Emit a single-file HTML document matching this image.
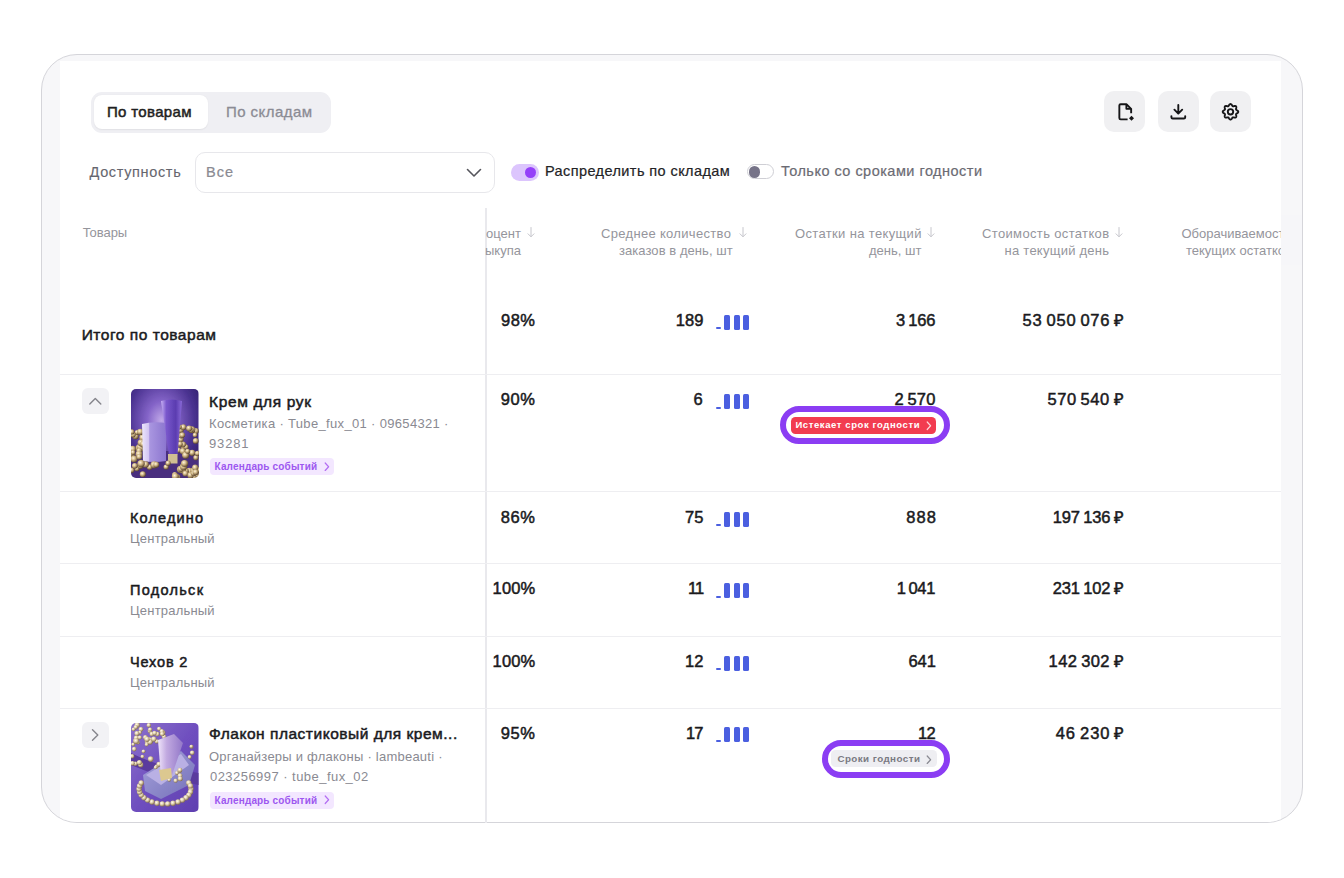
<!DOCTYPE html>
<html><head><meta charset="utf-8">
<style>
html,body{margin:0;padding:0;background:#fff;width:1344px;height:878px;overflow:hidden;font-family:"Liberation Sans",sans-serif}
.abs{position:absolute}
.t{position:absolute;white-space:nowrap}
#frame{position:absolute;left:40.5px;top:53.5px;width:1260px;height:767px;border:1.5px solid #d5d5da;border-radius:36px;background:#f7f7f9;overflow:hidden}
#white{position:absolute;left:18px;top:6.8px;width:1221.5px;height:800px;background:#fff}
.hl{position:absolute;left:60px;width:1221px;height:1.2px;background:#eeeef1}
.bars{position:absolute;width:34px;height:15px}
.bars i{position:absolute;background:#4b5fe0;border-radius:1.5px}
.ibtn{position:absolute;top:91px;width:41px;height:41px;border-radius:10px;background:#f0f0f2}
.ibtn svg{position:absolute;left:0;top:0}
.rbtn{position:absolute;left:82px;width:26.5px;height:25.5px;border-radius:6px;background:#f2f2f5}
.img{position:absolute;left:131px;width:67.5px;height:89.5px;border-radius:5px;overflow:hidden}
.outl{position:absolute;border:6px solid #8b3df3;border-radius:19px;background:#fff}
.badge{position:absolute;height:17px;border-radius:4.5px}
.cal{position:absolute;left:209.5px;width:124px;height:17px;border-radius:4px;background:#f3e7ff}
</style></head><body>
<div id="frame"><div id="white"></div></div>

<!-- segmented -->
<div class="abs" style="left:90.5px;top:92px;width:240.5px;height:40.5px;border-radius:11px;background:#efeff3"></div>
<div class="abs" style="left:94px;top:95px;width:114px;height:34px;border-radius:8px;background:#fff;box-shadow:0 0.5px 1.5px rgba(0,0,0,0.06)"></div>

<!-- select -->
<div class="abs" style="left:195px;top:152px;width:297.5px;height:38.5px;border:1px solid #e7e7eb;border-radius:10px;background:#fff"></div>
<svg class="abs" style="left:462px;top:162px" width="24" height="22" viewBox="0 0 24 22"><path d="M5.5 7.5 L12 14 L18.5 7.5" fill="none" stroke="#55555c" stroke-width="1.6" stroke-linecap="round" stroke-linejoin="round"/></svg>

<!-- toggles -->
<div class="abs" style="left:511px;top:164px;width:27.5px;height:16.5px;border-radius:8.5px;background:#dcc5fd"></div>
<div class="abs" style="left:524.8px;top:166.5px;width:11.5px;height:11.5px;border-radius:50%;background:#9540f9"></div>
<div class="abs" style="left:747px;top:163.8px;width:24.5px;height:13.5px;border:1.5px solid #cfcfd5;border-radius:9px;background:#fff"></div>
<div class="abs" style="left:749px;top:166.4px;width:11.3px;height:11.3px;border-radius:50%;background:#767388"></div>

<!-- icon buttons -->
<div class="ibtn" style="left:1104px"><svg width="41" height="41" viewBox="0 0 41 41"><path d="M27.15 22.3 V17.85 L22.4 13.25 H16.7 Q15.35 13.25 15.35 14.6 V27 Q15.35 28.35 16.7 28.35 H23.6" fill="none" stroke="#161618" stroke-width="1.9" stroke-linejoin="round"/><path d="M22.4 13.5 V17.85 H26.9" fill="none" stroke="#161618" stroke-width="1.9" stroke-linejoin="round"/><path d="M27.5 24.8 L30 27.3 L27.5 29.8 L25 27.3 Z" fill="#161618"/></svg></div>
<div class="ibtn" style="left:1157.5px"><svg width="41" height="41" viewBox="0 0 41 41"><path d="M20.3 13.9 V22.3 M16.4 18.7 L20.3 22.6 L24.2 18.7" fill="none" stroke="#161618" stroke-width="1.9" stroke-linecap="round" stroke-linejoin="round"/><path d="M13.4 25.1 V26.2 Q13.4 27.5 14.7 27.5 H25.9 Q27.2 27.5 27.2 26.2 V25.1" fill="none" stroke="#161618" stroke-width="1.9" stroke-linecap="round"/></svg></div>
<div class="ibtn" style="left:1210px"><svg width="41" height="41" viewBox="0 0 41 41" id="gear"><path d="M20.50 13.05 L20.80 13.10 L21.10 13.24 L21.37 13.45 L21.62 13.73 L21.85 14.03 L22.05 14.35 L22.24 14.64 L22.42 14.89 L22.61 15.08 L22.82 15.21 L23.05 15.27 L23.32 15.26 L23.63 15.22 L23.97 15.14 L24.33 15.06 L24.71 15.01 L25.08 14.99 L25.43 15.03 L25.73 15.14 L25.98 15.32 L26.16 15.57 L26.27 15.87 L26.31 16.22 L26.29 16.59 L26.24 16.97 L26.16 17.33 L26.08 17.67 L26.04 17.98 L26.03 18.25 L26.09 18.48 L26.22 18.69 L26.41 18.88 L26.66 19.06 L26.95 19.25 L27.27 19.45 L27.57 19.68 L27.85 19.93 L28.06 20.20 L28.20 20.50 L28.25 20.80 L28.20 21.10 L28.06 21.40 L27.85 21.67 L27.57 21.92 L27.27 22.15 L26.95 22.35 L26.66 22.54 L26.41 22.72 L26.22 22.91 L26.09 23.12 L26.03 23.35 L26.04 23.62 L26.08 23.93 L26.16 24.27 L26.24 24.63 L26.29 25.01 L26.31 25.38 L26.27 25.73 L26.16 26.03 L25.98 26.28 L25.73 26.46 L25.43 26.57 L25.08 26.61 L24.71 26.59 L24.33 26.54 L23.97 26.46 L23.63 26.38 L23.32 26.34 L23.05 26.33 L22.82 26.39 L22.61 26.52 L22.42 26.71 L22.24 26.96 L22.05 27.25 L21.85 27.57 L21.62 27.87 L21.37 28.15 L21.10 28.36 L20.80 28.50 L20.50 28.55 L20.20 28.50 L19.90 28.36 L19.63 28.15 L19.38 27.87 L19.15 27.57 L18.95 27.25 L18.76 26.96 L18.58 26.71 L18.39 26.52 L18.18 26.39 L17.95 26.33 L17.68 26.34 L17.37 26.38 L17.03 26.46 L16.67 26.54 L16.29 26.59 L15.92 26.61 L15.57 26.57 L15.27 26.46 L15.02 26.28 L14.84 26.03 L14.73 25.73 L14.69 25.38 L14.71 25.01 L14.76 24.63 L14.84 24.27 L14.92 23.93 L14.96 23.62 L14.97 23.35 L14.91 23.12 L14.78 22.91 L14.59 22.72 L14.34 22.54 L14.05 22.35 L13.73 22.15 L13.43 21.92 L13.15 21.67 L12.94 21.40 L12.80 21.10 L12.75 20.80 L12.80 20.50 L12.94 20.20 L13.15 19.93 L13.43 19.68 L13.73 19.45 L14.05 19.25 L14.34 19.06 L14.59 18.88 L14.78 18.69 L14.91 18.48 L14.97 18.25 L14.96 17.98 L14.92 17.67 L14.84 17.33 L14.76 16.97 L14.71 16.59 L14.69 16.22 L14.73 15.87 L14.84 15.57 L15.02 15.32 L15.27 15.14 L15.57 15.03 L15.92 14.99 L16.29 15.01 L16.67 15.06 L17.03 15.14 L17.37 15.22 L17.68 15.26 L17.95 15.27 L18.18 15.21 L18.39 15.08 L18.58 14.89 L18.76 14.64 L18.95 14.35 L19.15 14.03 L19.38 13.73 L19.63 13.45 L19.90 13.24 L20.20 13.10 L20.50 13.05 Z" fill="none" stroke="#161618" stroke-width="1.9" stroke-linejoin="round"/><circle cx="20.5" cy="20.8" r="2.7" fill="none" stroke="#161618" stroke-width="1.9"/></svg></div>

<!-- table lines -->
<div class="abs" style="left:485.3px;top:208px;width:1.4px;height:615px;background:#e9e9ed"></div>
<div class="hl" style="top:374px"></div>
<div class="hl" style="top:490.6px"></div>
<div class="hl" style="top:563px"></div>
<div class="hl" style="top:635.6px"></div>
<div class="hl" style="top:708px"></div>

<!-- row buttons -->
<div class="rbtn" style="top:388.3px"><svg width="27" height="26" viewBox="0 0 27 26"><path d="M7.8 16 L13.3 10.5 L18.8 16" fill="none" stroke="#85858c" stroke-width="1.4" stroke-linecap="round" stroke-linejoin="round"/></svg></div>
<div class="rbtn" style="top:722px"><svg width="27" height="26" viewBox="0 0 27 26"><path d="M10.5 7.8 L15.8 13 L10.5 18.2" fill="none" stroke="#85858c" stroke-width="1.4" stroke-linecap="round" stroke-linejoin="round"/></svg></div>

<!-- images -->
<div class="img" style="top:388.5px"><svg width="67.5" height="89.5" viewBox="0 0 67.5 89.5"><defs><radialGradient id="bg1" cx="0.45" cy="0.35" r="0.7"><stop offset="0" stop-color="#c0a8e8"/><stop offset="0.3" stop-color="#8464c8"/><stop offset="0.7" stop-color="#4a3290"/><stop offset="1" stop-color="#2e1f6a"/></radialGradient><radialGradient id="pg1" cx="0.38" cy="0.35" r="0.65"><stop offset="0" stop-color="#fff6de"/><stop offset="0.45" stop-color="#d2b988"/><stop offset="1" stop-color="#5e4830"/></radialGradient><linearGradient id="tb" x1="0" x2="1"><stop offset="0" stop-color="#c8b2f4"/><stop offset="0.25" stop-color="#7a58cc"/><stop offset="0.7" stop-color="#5a3cb0"/><stop offset="1" stop-color="#8a6ad8"/></linearGradient><linearGradient id="bx" x1="0" x2="1"><stop offset="0" stop-color="#ece6fb"/><stop offset="0.28" stop-color="#d2c4f2"/><stop offset="0.32" stop-color="#a996e0"/><stop offset="1" stop-color="#8c76cf"/></linearGradient><filter id="bl1"><feGaussianBlur stdDeviation="0.5"/></filter></defs><g filter="url(#bl1)"><rect width="67.5" height="89.5" fill="url(#bg1)"/><rect y="62" width="67.5" height="27.5" fill="#4a2f7e"/><circle cx="4.5" cy="47.2" r="3.2" fill="url(#pg1)"/><circle cx="1.0" cy="65.7" r="2.8" fill="url(#pg1)"/><circle cx="0.8" cy="64.4" r="2.4" fill="url(#pg1)"/><circle cx="6.1" cy="43.4" r="2.5" fill="url(#pg1)"/><circle cx="5.9" cy="79.7" r="2.5" fill="url(#pg1)"/><circle cx="3.1" cy="70.1" r="3.5" fill="url(#pg1)"/><circle cx="8.1" cy="59.0" r="3.6" fill="url(#pg1)"/><circle cx="0.7" cy="81.2" r="2.7" fill="url(#pg1)"/><circle cx="2.0" cy="45.7" r="2.8" fill="url(#pg1)"/><circle cx="11.4" cy="48.7" r="3.1" fill="url(#pg1)"/><circle cx="8.9" cy="57.9" r="3.1" fill="url(#pg1)"/><circle cx="0.9" cy="42.9" r="2.6" fill="url(#pg1)"/><circle cx="9.5" cy="60.5" r="2.8" fill="url(#pg1)"/><circle cx="8.2" cy="61.8" r="2.8" fill="url(#pg1)"/><circle cx="11.1" cy="73.6" r="2.7" fill="url(#pg1)"/><circle cx="8.0" cy="65.2" r="3.5" fill="url(#pg1)"/><circle cx="10.2" cy="53.8" r="3.6" fill="url(#pg1)"/><circle cx="1.7" cy="60.1" r="3.3" fill="url(#pg1)"/><circle cx="2.1" cy="63.5" r="2.4" fill="url(#pg1)"/><circle cx="9.4" cy="76.7" r="3.1" fill="url(#pg1)"/><circle cx="12.3" cy="55.1" r="3.2" fill="url(#pg1)"/><circle cx="8.3" cy="67.8" r="2.9" fill="url(#pg1)"/><circle cx="11.8" cy="85.3" r="3.0" fill="url(#pg1)"/><circle cx="9.3" cy="42.9" r="3.2" fill="url(#pg1)"/><circle cx="60.3" cy="87.7" r="3.4" fill="url(#pg1)"/><circle cx="52.8" cy="57.3" r="3.2" fill="url(#pg1)"/><circle cx="47.5" cy="61.1" r="2.6" fill="url(#pg1)"/><circle cx="49.4" cy="40.9" r="3.3" fill="url(#pg1)"/><circle cx="49.7" cy="50.4" r="2.9" fill="url(#pg1)"/><circle cx="64.9" cy="42.0" r="2.9" fill="url(#pg1)"/><circle cx="58.3" cy="82.2" r="3.4" fill="url(#pg1)"/><circle cx="64.7" cy="51.9" r="2.9" fill="url(#pg1)"/><circle cx="54.4" cy="82.2" r="3.5" fill="url(#pg1)"/><circle cx="50.1" cy="46.8" r="2.7" fill="url(#pg1)"/><circle cx="51.8" cy="62.2" r="3.1" fill="url(#pg1)"/><circle cx="52.4" cy="38.2" r="2.9" fill="url(#pg1)"/><circle cx="54.6" cy="66.3" r="3.5" fill="url(#pg1)"/><circle cx="61.2" cy="63.8" r="3.1" fill="url(#pg1)"/><circle cx="60.9" cy="40.7" r="3.5" fill="url(#pg1)"/><circle cx="63.0" cy="81.7" r="3.4" fill="url(#pg1)"/><circle cx="55.0" cy="57.9" r="2.5" fill="url(#pg1)"/><circle cx="60.0" cy="41.1" r="2.5" fill="url(#pg1)"/><circle cx="51.3" cy="46.1" r="2.8" fill="url(#pg1)"/><circle cx="48.1" cy="38.0" r="2.6" fill="url(#pg1)"/><circle cx="49.1" cy="56.2" r="2.4" fill="url(#pg1)"/><circle cx="64.9" cy="68.7" r="2.6" fill="url(#pg1)"/><circle cx="52.2" cy="55.4" r="2.8" fill="url(#pg1)"/><circle cx="49.5" cy="80.4" r="3.6" fill="url(#pg1)"/><circle cx="56.6" cy="62.2" r="2.5" fill="url(#pg1)"/><circle cx="49.1" cy="55.1" r="2.7" fill="url(#pg1)"/><circle cx="64.0" cy="46.1" r="2.4" fill="url(#pg1)"/><circle cx="66.5" cy="64.4" r="2.6" fill="url(#pg1)"/><circle cx="58.1" cy="39.4" r="3.0" fill="url(#pg1)"/><circle cx="67.1" cy="81.2" r="3.2" fill="url(#pg1)"/><path d="M11 35 Q22 32 35 34 L35 72 Q22 74 12 72 Z" fill="url(#bx)"/><path d="M30 12 Q40 9 51 12 L46.5 66 L38 66 Z" fill="url(#tb)"/><rect x="37" y="65" width="9.5" height="9.5" fill="#d0bf92"/><circle cx="18.7" cy="78.2" r="2.8" fill="url(#pg1)"/><circle cx="51.4" cy="81.1" r="3.5" fill="url(#pg1)"/><circle cx="23.1" cy="75.8" r="3.6" fill="url(#pg1)"/><circle cx="65.0" cy="86.5" r="3.6" fill="url(#pg1)"/><circle cx="54.4" cy="84.6" r="2.9" fill="url(#pg1)"/><circle cx="35.1" cy="78.0" r="2.6" fill="url(#pg1)"/><circle cx="3.8" cy="76.8" r="2.9" fill="url(#pg1)"/><circle cx="46.3" cy="88.3" r="3.1" fill="url(#pg1)"/><circle cx="62.0" cy="88.8" r="3.7" fill="url(#pg1)"/><circle cx="25.3" cy="75.7" r="2.9" fill="url(#pg1)"/><circle cx="14.6" cy="75.5" r="3.3" fill="url(#pg1)"/><circle cx="59.6" cy="86.3" r="3.2" fill="url(#pg1)"/><circle cx="43.8" cy="85.6" r="2.7" fill="url(#pg1)"/><circle cx="44.3" cy="87.5" r="3.5" fill="url(#pg1)"/><circle cx="50.0" cy="80.1" r="2.8" fill="url(#pg1)"/><circle cx="52.5" cy="77.7" r="3.6" fill="url(#pg1)"/><circle cx="64.2" cy="78.7" r="3.1" fill="url(#pg1)"/><circle cx="62.6" cy="84.3" r="2.8" fill="url(#pg1)"/><circle cx="10.1" cy="74.6" r="3.7" fill="url(#pg1)"/><circle cx="53.6" cy="74.5" r="3.6" fill="url(#pg1)"/><circle cx="64.7" cy="83.2" r="3.0" fill="url(#pg1)"/><circle cx="37.1" cy="74.2" r="2.6" fill="url(#pg1)"/></g></svg></div>
<div class="img" style="top:722.5px"><svg width="67.5" height="89.5" viewBox="0 0 67.5 89.5"><defs><linearGradient id="bg2" x1="0" y1="0" x2="1" y2="1"><stop offset="0" stop-color="#8c72cc"/><stop offset="0.5" stop-color="#6f4fbf"/><stop offset="1" stop-color="#5f3fb0"/></linearGradient><radialGradient id="pg2" cx="0.38" cy="0.35" r="0.65"><stop offset="0" stop-color="#fffbf0"/><stop offset="0.45" stop-color="#e2d3b0"/><stop offset="1" stop-color="#86704e"/></radialGradient><linearGradient id="tb2" x1="0" x2="1"><stop offset="0" stop-color="#efe4fa"/><stop offset="0.35" stop-color="#c1a9e0"/><stop offset="1" stop-color="#9277c8"/></linearGradient><linearGradient id="bx2" x1="0" y1="0" x2="1" y2="1"><stop offset="0" stop-color="#a6a2dc"/><stop offset="1" stop-color="#7470b8"/></linearGradient><filter id="bl2"><feGaussianBlur stdDeviation="0.5"/></filter></defs><g filter="url(#bl2)"><rect width="67.5" height="89.5" fill="url(#bg2)"/><path d="M0 30 Q30 45 67.5 50 L67.5 62 Q30 55 0 42 Z" fill="#5a3a9e"/><circle cx="33.0" cy="13.7" r="2.3" fill="url(#pg2)"/><circle cx="31.7" cy="9.8" r="2.7" fill="url(#pg2)"/><circle cx="28.1" cy="5.8" r="2.1" fill="url(#pg2)"/><circle cx="10.0" cy="6.3" r="2.4" fill="url(#pg2)"/><circle cx="8.8" cy="9.5" r="1.9" fill="url(#pg2)"/><circle cx="30.9" cy="8.4" r="2.3" fill="url(#pg2)"/><circle cx="19.8" cy="18.3" r="2.2" fill="url(#pg2)"/><circle cx="31.2" cy="11.0" r="2.3" fill="url(#pg2)"/><circle cx="17.8" cy="2.3" r="2.2" fill="url(#pg2)"/><circle cx="6.2" cy="2.1" r="2.6" fill="url(#pg2)"/><circle cx="5.9" cy="10.5" r="2.5" fill="url(#pg2)"/><circle cx="18.9" cy="7.9" r="2.3" fill="url(#pg2)"/><circle cx="18.9" cy="16.1" r="1.9" fill="url(#pg2)"/><circle cx="19.1" cy="6.5" r="2.1" fill="url(#pg2)"/><circle cx="26.3" cy="11.1" r="2.4" fill="url(#pg2)"/><circle cx="25.8" cy="18.4" r="2.2" fill="url(#pg2)"/><circle cx="20.8" cy="11.1" r="2.3" fill="url(#pg2)"/><circle cx="23.6" cy="10.1" r="2.3" fill="url(#pg2)"/><circle cx="16.3" cy="18.9" r="2.5" fill="url(#pg2)"/><circle cx="29.8" cy="19.0" r="2.1" fill="url(#pg2)"/><circle cx="19.0" cy="19.0" r="2.6" fill="url(#pg2)"/><circle cx="4.7" cy="4.2" r="2.2" fill="url(#pg2)"/><circle cx="2.5" cy="6.3" r="1.9" fill="url(#pg2)"/><circle cx="22.8" cy="16.1" r="2.7" fill="url(#pg2)"/><circle cx="5.3" cy="14.9" r="2.5" fill="url(#pg2)"/><circle cx="4.9" cy="17.9" r="2.8" fill="url(#pg2)"/><circle cx="4.4" cy="40.7" r="2.2" fill="url(#pg2)"/><circle cx="9.7" cy="41.7" r="2.6" fill="url(#pg2)"/><circle cx="3.2" cy="26.1" r="2.3" fill="url(#pg2)"/><circle cx="6.8" cy="19.5" r="2.1" fill="url(#pg2)"/><circle cx="14.4" cy="14.5" r="2.4" fill="url(#pg2)"/><circle cx="8.8" cy="14.5" r="2.1" fill="url(#pg2)"/><circle cx="12.5" cy="28.3" r="1.9" fill="url(#pg2)"/><circle cx="19.7" cy="36.1" r="2.8" fill="url(#pg2)"/><circle cx="2.1" cy="21.4" r="1.8" fill="url(#pg2)"/><circle cx="15.6" cy="21.6" r="1.9" fill="url(#pg2)"/><circle cx="8.4" cy="39.5" r="2.6" fill="url(#pg2)"/><circle cx="5.2" cy="18.2" r="2.7" fill="url(#pg2)"/><circle cx="11.4" cy="33.6" r="1.9" fill="url(#pg2)"/><circle cx="1.2" cy="33.3" r="2.2" fill="url(#pg2)"/><circle cx="1.4" cy="40.3" r="2.4" fill="url(#pg2)"/><circle cx="16.0" cy="16.3" r="2.7" fill="url(#pg2)"/><circle cx="58.6" cy="34.1" r="2.0" fill="url(#pg2)"/><circle cx="61.2" cy="29.7" r="2.3" fill="url(#pg2)"/><circle cx="60.5" cy="23.8" r="2.0" fill="url(#pg2)"/><circle cx="60.3" cy="23.5" r="1.7" fill="url(#pg2)"/><path d="M12 52 L50 28 L64 42 L58 62 L30 76 L14 68 Z" fill="url(#bx2)"/><path d="M15 52 L50 31 L58 42 L30 62 Z" fill="#b9b0e4"/><circle cx="25.5" cy="43.6" r="2.1" fill="url(#pg2)"/><circle cx="33.2" cy="53.7" r="2.1" fill="url(#pg2)"/><circle cx="39.0" cy="43.2" r="2.1" fill="url(#pg2)"/><circle cx="24.5" cy="44.5" r="1.8" fill="url(#pg2)"/><circle cx="46.0" cy="49.9" r="2.0" fill="url(#pg2)"/><circle cx="38.2" cy="56.8" r="1.9" fill="url(#pg2)"/><circle cx="48.6" cy="47.8" r="2.3" fill="url(#pg2)"/><circle cx="49.0" cy="47.1" r="2.3" fill="url(#pg2)"/><circle cx="44.6" cy="57.7" r="2.1" fill="url(#pg2)"/><circle cx="49.0" cy="52.7" r="2.4" fill="url(#pg2)"/><circle cx="36.1" cy="46.3" r="1.9" fill="url(#pg2)"/><circle cx="27.9" cy="41.3" r="2.5" fill="url(#pg2)"/><circle cx="31.7" cy="42.9" r="1.9" fill="url(#pg2)"/><circle cx="49.2" cy="55.7" r="2.5" fill="url(#pg2)"/><path d="M27 17 L43 11 L52 20 L41 52 L30 54 Z" fill="url(#tb2)"/><path d="M28 47 L40 45 L41 55 L30 58 Z" fill="#dcc890"/><circle cx="60.0" cy="66.0" r="2.7" fill="url(#pg2)"/><circle cx="59.4" cy="69.1" r="2.7" fill="url(#pg2)"/><circle cx="57.8" cy="72.1" r="2.7" fill="url(#pg2)"/><circle cx="55.0" cy="74.8" r="2.7" fill="url(#pg2)"/><circle cx="51.4" cy="77.1" r="2.7" fill="url(#pg2)"/><circle cx="47.0" cy="79.0" r="2.7" fill="url(#pg2)"/><circle cx="42.0" cy="80.3" r="2.7" fill="url(#pg2)"/><circle cx="36.7" cy="80.9" r="2.7" fill="url(#pg2)"/><circle cx="31.3" cy="80.9" r="2.7" fill="url(#pg2)"/><circle cx="26.0" cy="80.3" r="2.7" fill="url(#pg2)"/><circle cx="21.0" cy="79.0" r="2.7" fill="url(#pg2)"/><circle cx="16.6" cy="77.1" r="2.7" fill="url(#pg2)"/><circle cx="13.0" cy="74.8" r="2.7" fill="url(#pg2)"/><circle cx="10.2" cy="72.1" r="2.7" fill="url(#pg2)"/><circle cx="8.6" cy="69.1" r="2.7" fill="url(#pg2)"/><circle cx="8.0" cy="66.0" r="2.7" fill="url(#pg2)"/><circle cx="8.6" cy="62.9" r="2.7" fill="url(#pg2)"/><circle cx="10.2" cy="59.9" r="2.7" fill="url(#pg2)"/><circle cx="57.8" cy="59.9" r="2.7" fill="url(#pg2)"/><circle cx="59.4" cy="62.9" r="2.7" fill="url(#pg2)"/></g></svg></div>

<!-- calendar badges -->
<div class="cal" style="top:458px"></div>
<div class="cal" style="top:791.5px"></div>

<!-- outlines + badges -->
<div class="outl" style="left:780.4px;top:406px;width:157.3px;height:25.5px"></div>
<div class="badge" style="left:790.8px;top:416.7px;width:145.5px;background:#f23c50"></div>
<div class="outl" style="left:822.3px;top:739.7px;width:115.7px;height:26px"></div>
<div class="badge" style="left:830.6px;top:749.8px;width:106.4px;background:#eeeef2"></div>

<div class="bars" style="left:715.4px;top:314.5px"><i style="left:0.3px;top:12.6px;width:5.4px;height:2.3px;border-radius:1px"></i><i style="left:9.1px;top:0;width:5.7px;height:15px"></i><i style="left:18.7px;top:0;width:5.7px;height:15px"></i><i style="left:28.1px;top:0;width:5.6px;height:15px"></i></div>
<div class="bars" style="left:715.4px;top:394px"><i style="left:0.3px;top:12.6px;width:5.4px;height:2.3px;border-radius:1px"></i><i style="left:9.1px;top:0;width:5.7px;height:15px"></i><i style="left:18.7px;top:0;width:5.7px;height:15px"></i><i style="left:28.1px;top:0;width:5.6px;height:15px"></i></div>
<div class="bars" style="left:715.4px;top:511.5px"><i style="left:0.3px;top:12.6px;width:5.4px;height:2.3px;border-radius:1px"></i><i style="left:9.1px;top:0;width:5.7px;height:15px"></i><i style="left:18.7px;top:0;width:5.7px;height:15px"></i><i style="left:28.1px;top:0;width:5.6px;height:15px"></i></div>
<div class="bars" style="left:715.4px;top:583px"><i style="left:0.3px;top:12.6px;width:5.4px;height:2.3px;border-radius:1px"></i><i style="left:9.1px;top:0;width:5.7px;height:15px"></i><i style="left:18.7px;top:0;width:5.7px;height:15px"></i><i style="left:28.1px;top:0;width:5.6px;height:15px"></i></div>
<div class="bars" style="left:715.4px;top:655.5px"><i style="left:0.3px;top:12.6px;width:5.4px;height:2.3px;border-radius:1px"></i><i style="left:9.1px;top:0;width:5.7px;height:15px"></i><i style="left:18.7px;top:0;width:5.7px;height:15px"></i><i style="left:28.1px;top:0;width:5.6px;height:15px"></i></div>
<div class="bars" style="left:715.4px;top:727.3px"><i style="left:0.3px;top:12.6px;width:5.4px;height:2.3px;border-radius:1px"></i><i style="left:9.1px;top:0;width:5.7px;height:15px"></i><i style="left:18.7px;top:0;width:5.7px;height:15px"></i><i style="left:28.1px;top:0;width:5.6px;height:15px"></i></div><svg class="abs" style="left:526.5px;top:226.5px" width="8" height="11" viewBox="0 0 8 11"><path d="M4 0.5 V9.6 M1 6.8 L4 9.8 L7 6.8" fill="none" stroke="#c6c6cc" stroke-width="1" stroke-linecap="round" stroke-linejoin="round"/></svg><svg class="abs" style="left:739px;top:226.5px" width="8" height="11" viewBox="0 0 8 11"><path d="M4 0.5 V9.6 M1 6.8 L4 9.8 L7 6.8" fill="none" stroke="#c6c6cc" stroke-width="1" stroke-linecap="round" stroke-linejoin="round"/></svg><svg class="abs" style="left:926.5px;top:226.5px" width="8" height="11" viewBox="0 0 8 11"><path d="M4 0.5 V9.6 M1 6.8 L4 9.8 L7 6.8" fill="none" stroke="#c6c6cc" stroke-width="1" stroke-linecap="round" stroke-linejoin="round"/></svg><svg class="abs" style="left:1115px;top:226.5px" width="8" height="11" viewBox="0 0 8 11"><path d="M4 0.5 V9.6 M1 6.8 L4 9.8 L7 6.8" fill="none" stroke="#c6c6cc" stroke-width="1" stroke-linecap="round" stroke-linejoin="round"/></svg><svg class="abs" style="left:324px;top:461.5px" width="6" height="9.5" viewBox="0 0 6 9.5"><path d="M1.2 1 L4.6 4.75 L1.2 8.5" fill="none" stroke="#b36ef2" stroke-width="1.2" stroke-linecap="round" stroke-linejoin="round"/></svg><svg class="abs" style="left:324px;top:795px" width="6" height="9.5" viewBox="0 0 6 9.5"><path d="M1.2 1 L4.6 4.75 L1.2 8.5" fill="none" stroke="#b36ef2" stroke-width="1.2" stroke-linecap="round" stroke-linejoin="round"/></svg><svg class="abs" style="left:926.3px;top:421px" width="6" height="9.5" viewBox="0 0 6 9.5"><path d="M1.2 1 L4.6 4.75 L1.2 8.5" fill="none" stroke="#ffd6da" stroke-width="1.2" stroke-linecap="round" stroke-linejoin="round"/></svg><svg class="abs" style="left:926px;top:754.5px" width="6" height="9.5" viewBox="0 0 6 9.5"><path d="M1.2 1 L4.6 4.75 L1.2 8.5" fill="none" stroke="#8a8a92" stroke-width="1.2" stroke-linecap="round" stroke-linejoin="round"/></svg><div class="abs" style="left:1281px;top:215px;width:21px;height:50px;background:#f6f6f9;z-index:5"></div>
<div class="t" id="seg1" style="top:104.45px;font-size:15px;line-height:15px;font-weight:400;color:#1f1f22;letter-spacing:0.333px;left:107.00px;-webkit-text-stroke:0.5px #1f1f22;">По товарам</div>
<div class="t" id="seg2" style="top:104.45px;font-size:15px;line-height:15px;font-weight:400;color:#8b8b94;letter-spacing:0.444px;left:226.00px;-webkit-text-stroke:0.3px #8b8b94;">По складам</div>
<div class="t" id="dost" style="top:164.53px;font-size:14.5px;line-height:14.5px;font-weight:400;color:#66666e;letter-spacing:0.650px;left:89.50px;-webkit-text-stroke:0.1px #66666e;">Доступность</div>
<div class="t" id="vse" style="top:164.53px;font-size:14.5px;line-height:14.5px;font-weight:400;color:#8a8a92;letter-spacing:1.000px;left:206.00px;-webkit-text-stroke:0.2px #8a8a92;">Все</div>
<div class="t" id="tg1" style="top:163.94px;font-size:14.5px;line-height:14.5px;font-weight:400;color:#232326;letter-spacing:0.409px;left:545.00px;-webkit-text-stroke:0.2px #232326;">Распределить по складам</div>
<div class="t" id="tg2" style="top:163.94px;font-size:14.5px;line-height:14.5px;font-weight:400;color:#6b6b73;letter-spacing:0.480px;left:781.00px;-webkit-text-stroke:0.2px #6b6b73;">Только со сроками годности</div>
<div class="t" id="h0" style="top:225.79px;font-size:13px;line-height:13px;font-weight:400;color:#95959c;letter-spacing:-0.040px;left:82.70px;">Товары</div>
<div class="t" id="h1a" style="top:226.79px;font-size:13px;line-height:13px;font-weight:400;color:#95959c;left:486.00px;">оцент</div>
<div class="t" id="h1b" style="top:244.09px;font-size:13px;line-height:13px;font-weight:400;color:#95959c;left:485.00px;">ыкупа</div>
<div class="t" id="h2a" style="top:226.79px;font-size:13px;line-height:13px;font-weight:400;color:#95959c;letter-spacing:0.318px;left:601.00px;">Среднее количество</div>
<div class="t" id="h2b" style="top:244.09px;font-size:13px;line-height:13px;font-weight:400;color:#95959c;letter-spacing:0.059px;left:619.00px;">заказов в день, шт</div>
<div class="t" id="h3a" style="top:226.79px;font-size:13px;line-height:13px;font-weight:400;color:#95959c;letter-spacing:0.353px;left:795.00px;">Остатки на текущий</div>
<div class="t" id="h3b" style="top:244.09px;font-size:13px;line-height:13px;font-weight:400;color:#95959c;left:869.00px;">день, шт</div>
<div class="t" id="h4a" style="top:226.79px;font-size:13px;line-height:13px;font-weight:400;color:#95959c;letter-spacing:0.353px;left:982.00px;">Стоимость остатков</div>
<div class="t" id="h4b" style="top:244.09px;font-size:13px;line-height:13px;font-weight:400;color:#95959c;letter-spacing:0.243px;left:1004.60px;">на текущий день</div>
<div class="t" id="h5a" style="top:226.79px;font-size:13px;line-height:13px;font-weight:400;color:#95959c;left:1181.50px;">Оборачиваемость</div>
<div class="t" id="h5b" style="top:244.09px;font-size:13px;line-height:13px;font-weight:400;color:#95959c;left:1186.00px;">текущих остатков</div>
<div class="t" id="tot" style="top:326.67px;font-size:15.5px;line-height:15.5px;font-weight:400;color:#1a1a1d;letter-spacing:0.527px;left:81.70px;-webkit-text-stroke:0.5px #1a1a1d;">Итого по товарам</div>
<div class="t" id="r0v0" style="top:311.89px;font-size:16.5px;line-height:16.5px;font-weight:400;color:#1a1a1d;letter-spacing:0.500px;left:501.00px;-webkit-text-stroke:0.5px #1a1a1d;">98%</div>
<div class="t" id="r0v1" style="top:311.89px;font-size:16.5px;line-height:16.5px;font-weight:400;color:#1a1a1d;letter-spacing:0.150px;left:675.70px;-webkit-text-stroke:0.5px #1a1a1d;">189</div>
<div class="t" id="r0v2" style="top:311.89px;font-size:16.5px;line-height:16.5px;font-weight:400;color:#1a1a1d;letter-spacing:-0.150px;left:896.00px;-webkit-text-stroke:0.5px #1a1a1d;">3&#8201;166</div>
<div class="t" id="r0v3" style="top:311.89px;font-size:16.5px;line-height:16.5px;font-weight:400;color:#1a1a1d;letter-spacing:0.764px;left:1022.60px;-webkit-text-stroke:0.5px #1a1a1d;">53&#8201;050&#8201;076&#8201;₽</div>
<div class="t" id="p1n" style="top:394.17px;font-size:15.5px;line-height:15.5px;font-weight:400;color:#1a1a1d;letter-spacing:0.636px;left:209.00px;-webkit-text-stroke:0.5px #1a1a1d;">Крем для рук</div>
<div class="t" id="p1s" style="top:416.69px;font-size:13px;line-height:13px;font-weight:400;color:#8a8a92;letter-spacing:0.334px;left:209.00px;">Косметика · Tube_fux_01 · 09654321 ·</div>
<div class="t" id="p1s2" style="top:436.59px;font-size:13px;line-height:13px;font-weight:400;color:#8a8a92;letter-spacing:0.850px;left:209.00px;">93281</div>
<div class="t" id="r1v0" style="top:391.39px;font-size:16.5px;line-height:16.5px;font-weight:400;color:#1a1a1d;letter-spacing:0.650px;left:500.70px;-webkit-text-stroke:0.5px #1a1a1d;">90%</div>
<div class="t" id="r1v1" style="top:391.39px;font-size:16.5px;line-height:16.5px;font-weight:400;color:#1a1a1d;left:693.50px;-webkit-text-stroke:0.5px #1a1a1d;">6</div>
<div class="t" id="r1v2" style="top:391.39px;font-size:16.5px;line-height:16.5px;font-weight:400;color:#1a1a1d;letter-spacing:0.225px;left:894.50px;-webkit-text-stroke:0.5px #1a1a1d;">2&#8201;570</div>
<div class="t" id="r1v3" style="top:391.39px;font-size:16.5px;line-height:16.5px;font-weight:400;color:#1a1a1d;letter-spacing:0.575px;left:1047.40px;-webkit-text-stroke:0.5px #1a1a1d;">570&#8201;540&#8201;₽</div>
<div class="t" id="w0n" style="top:511.04px;font-size:14.5px;line-height:14.5px;font-weight:400;color:#1a1a1d;letter-spacing:1.143px;left:130.00px;-webkit-text-stroke:0.5px #1a1a1d;">Коледино</div>
<div class="t" id="w0s" style="top:531.79px;font-size:13px;line-height:13px;font-weight:400;color:#8a8a92;letter-spacing:0.200px;left:130.00px;">Центральный</div>
<div class="t" id="w0v0" style="top:508.89px;font-size:16.5px;line-height:16.5px;font-weight:400;color:#1a1a1d;letter-spacing:0.650px;left:500.70px;-webkit-text-stroke:0.5px #1a1a1d;">86%</div>
<div class="t" id="w0v1" style="top:508.89px;font-size:16.5px;line-height:16.5px;font-weight:400;color:#1a1a1d;left:685.00px;-webkit-text-stroke:0.5px #1a1a1d;">75</div>
<div class="t" id="w0v2" style="top:508.89px;font-size:16.5px;line-height:16.5px;font-weight:400;color:#1a1a1d;letter-spacing:1.100px;left:906.20px;-webkit-text-stroke:0.5px #1a1a1d;">888</div>
<div class="t" id="w0v3" style="top:508.89px;font-size:16.5px;line-height:16.5px;font-weight:400;color:#1a1a1d;letter-spacing:-0.088px;left:1052.70px;-webkit-text-stroke:0.5px #1a1a1d;">197&#8201;136&#8201;₽</div>
<div class="t" id="w1n" style="top:583.03px;font-size:14.5px;line-height:14.5px;font-weight:400;color:#1a1a1d;letter-spacing:1.286px;left:130.00px;-webkit-text-stroke:0.5px #1a1a1d;">Подольск</div>
<div class="t" id="w1s" style="top:603.79px;font-size:13px;line-height:13px;font-weight:400;color:#8a8a92;letter-spacing:0.200px;left:130.00px;">Центральный</div>
<div class="t" id="w1v0" style="top:580.40px;font-size:16.5px;line-height:16.5px;font-weight:400;color:#1a1a1d;letter-spacing:0.133px;left:492.60px;-webkit-text-stroke:0.5px #1a1a1d;">100%</div>
<div class="t" id="w1v1" style="top:580.40px;font-size:16.5px;line-height:16.5px;font-weight:400;color:#1a1a1d;letter-spacing:-1.000px;left:688.00px;-webkit-text-stroke:0.5px #1a1a1d;">11</div>
<div class="t" id="w1v2" style="top:580.40px;font-size:16.5px;line-height:16.5px;font-weight:400;color:#1a1a1d;letter-spacing:-0.325px;left:896.70px;-webkit-text-stroke:0.5px #1a1a1d;">1&#8201;041</div>
<div class="t" id="w1v3" style="top:580.40px;font-size:16.5px;line-height:16.5px;font-weight:400;color:#1a1a1d;letter-spacing:-0.088px;left:1052.70px;-webkit-text-stroke:0.5px #1a1a1d;">231&#8201;102&#8201;₽</div>
<div class="t" id="w2n" style="top:655.03px;font-size:14.5px;line-height:14.5px;font-weight:400;color:#1a1a1d;letter-spacing:0.833px;left:130.00px;-webkit-text-stroke:0.5px #1a1a1d;">Чехов 2</div>
<div class="t" id="w2s" style="top:675.79px;font-size:13px;line-height:13px;font-weight:400;color:#8a8a92;letter-spacing:0.200px;left:130.00px;">Центральный</div>
<div class="t" id="w2v0" style="top:652.90px;font-size:16.5px;line-height:16.5px;font-weight:400;color:#1a1a1d;letter-spacing:0.133px;left:492.60px;-webkit-text-stroke:0.5px #1a1a1d;">100%</div>
<div class="t" id="w2v1" style="top:652.90px;font-size:16.5px;line-height:16.5px;font-weight:400;color:#1a1a1d;left:685.00px;-webkit-text-stroke:0.5px #1a1a1d;">12</div>
<div class="t" id="w2v2" style="top:652.90px;font-size:16.5px;line-height:16.5px;font-weight:400;color:#1a1a1d;left:908.40px;-webkit-text-stroke:0.5px #1a1a1d;">641</div>
<div class="t" id="w2v3" style="top:652.90px;font-size:16.5px;line-height:16.5px;font-weight:400;color:#1a1a1d;letter-spacing:0.425px;left:1048.60px;-webkit-text-stroke:0.5px #1a1a1d;">142&#8201;302&#8201;₽</div>
<div class="t" id="p2n" style="top:726.16px;font-size:15.5px;line-height:15.5px;font-weight:400;color:#1a1a1d;letter-spacing:0.517px;left:209.00px;-webkit-text-stroke:0.5px #1a1a1d;">Флакон пластиковый для крем...</div>
<div class="t" id="p2s" style="top:749.79px;font-size:13px;line-height:13px;font-weight:400;color:#8a8a92;letter-spacing:0.235px;left:209.00px;">Органайзеры и флаконы · lambeauti ·</div>
<div class="t" id="p2s2" style="top:770.39px;font-size:13px;line-height:13px;font-weight:400;color:#8a8a92;letter-spacing:0.455px;left:210.00px;">023256997 · tube_fux_02</div>
<div class="t" id="r5v0" style="top:724.70px;font-size:16.5px;line-height:16.5px;font-weight:400;color:#1a1a1d;letter-spacing:0.650px;left:500.70px;-webkit-text-stroke:0.5px #1a1a1d;">95%</div>
<div class="t" id="r5v1" style="top:724.70px;font-size:16.5px;line-height:16.5px;font-weight:400;color:#1a1a1d;letter-spacing:-1.000px;left:686.00px;-webkit-text-stroke:0.5px #1a1a1d;">17</div>
<div class="t" id="r5v2" style="top:724.70px;font-size:16.5px;line-height:16.5px;font-weight:400;color:#1a1a1d;letter-spacing:-0.600px;left:918.00px;-webkit-text-stroke:0.5px #1a1a1d;">12</div>
<div class="t" id="r5v3" style="top:724.70px;font-size:16.5px;line-height:16.5px;font-weight:400;color:#1a1a1d;letter-spacing:0.886px;left:1055.80px;-webkit-text-stroke:0.5px #1a1a1d;">46&#8201;230&#8201;₽</div>
<div class="t" id="cal1" style="top:461.90px;font-size:10px;line-height:10px;font-weight:700;color:#9d58f0;letter-spacing:0.156px;left:214.50px;">Календарь событий</div>
<div class="t" id="cal2" style="top:795.50px;font-size:10px;line-height:10px;font-weight:700;color:#9d58f0;letter-spacing:0.156px;left:214.50px;">Календарь событий</div>
<div class="t" id="red" style="top:420.38px;font-size:9.5px;line-height:9.5px;font-weight:700;color:#ffffff;letter-spacing:0.600px;left:795.40px;">Истекает срок годности</div>
<div class="t" id="gry" style="top:753.83px;font-size:9.8px;line-height:9.8px;font-weight:700;color:#7a7a82;letter-spacing:0.446px;left:837.40px;">Сроки годности</div>
</body></html>
